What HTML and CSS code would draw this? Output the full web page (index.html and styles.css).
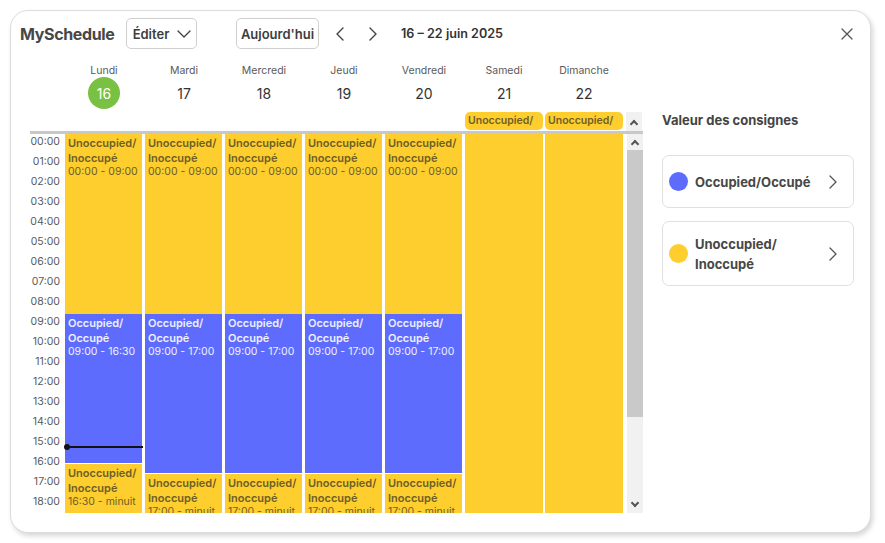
FILE: index.html
```html
<!DOCTYPE html>
<html lang="fr">
<head>
<meta charset="utf-8">
<title>MySchedule</title>
<link rel="stylesheet" href="styles.css">
</head>
<body>
<div class="card">
  <div class="header">
    <div class="title">MySchedule</div>
    <button class="btn btn-edit">Éditer
      <svg width="14" height="8" viewBox="0 0 14 8"><path d="M1 1 L7 7 L13 1" fill="none" stroke="#444" stroke-width="1.4" stroke-linecap="round" stroke-linejoin="round"/></svg>
    </button>
    <button class="btn btn-today">Aujourd'hui</button>
    <span class="nav nav-prev"><svg width="8" height="14" viewBox="0 0 8 14"><path d="M7 1 L1 7 L7 13" fill="none" stroke="#444" stroke-width="1.4" stroke-linecap="round" stroke-linejoin="round"/></svg></span>
    <span class="nav nav-next"><svg width="8" height="14" viewBox="0 0 8 14"><path d="M1 1 L7 7 L1 13" fill="none" stroke="#444" stroke-width="1.4" stroke-linecap="round" stroke-linejoin="round"/></svg></span>
    <div class="range">16 – 22 juin 2025</div>
    <span class="close"><svg width="12" height="12" viewBox="0 0 12 12"><path d="M1 1 L11 11 M11 1 L1 11" fill="none" stroke="#555" stroke-width="1.3" stroke-linecap="round"/></svg></span>
  </div>

  <div class="main">
    <div class="calendar">
      <div class="days">
        <div class="spacer"></div>
        <div class="day"><div class="dname">Lundi</div><div class="dnum today">16</div></div>
        <div class="day"><div class="dname">Mardi</div><div class="dnum">17</div></div>
        <div class="day"><div class="dname">Mercredi</div><div class="dnum">18</div></div>
        <div class="day"><div class="dname">Jeudi</div><div class="dnum">19</div></div>
        <div class="day"><div class="dname">Vendredi</div><div class="dnum">20</div></div>
        <div class="day"><div class="dname">Samedi</div><div class="dnum">21</div></div>
        <div class="day"><div class="dname">Dimanche</div><div class="dnum">22</div></div>
        <div class="gap"></div>
        <div class="sb-spacer"></div>
      </div>

      <div class="allday">
        <div class="spacer"></div>
        <div class="acell"></div>
        <div class="acell"></div>
        <div class="acell"></div>
        <div class="acell"></div>
        <div class="acell"></div>
        <div class="acell"><div class="chip">Unoccupied/</div></div>
        <div class="acell"><div class="chip">Unoccupied/</div></div>
        <div class="gap"></div>
        <div class="sb-mini"><span class="caret up"></span></div>
      </div>

      <div class="sep"></div>

      <div class="body">
        <div class="viewport">
          <div class="grid">
            <div class="times">
              <div class="t">00:00</div><div class="t">01:00</div><div class="t">02:00</div><div class="t">03:00</div>
              <div class="t">04:00</div><div class="t">05:00</div><div class="t">06:00</div><div class="t">07:00</div>
              <div class="t">08:00</div><div class="t">09:00</div><div class="t">10:00</div><div class="t">11:00</div>
              <div class="t">12:00</div><div class="t">13:00</div><div class="t">14:00</div><div class="t">15:00</div>
              <div class="t">16:00</div><div class="t">17:00</div><div class="t">18:00</div><div class="t">19:00</div>
              <div class="t">20:00</div><div class="t">21:00</div><div class="t">22:00</div><div class="t">23:00</div>
            </div>

            <div class="col">
              <div class="ev un" style="height:180px"><b>Unoccupied/</b><b>Inoccupé</b><span>00:00 - 09:00</span></div>
              <div class="ev oc" style="height:150px"><b>Occupied/</b><b>Occupé</b><span>09:00 - 16:30</span></div>
              <div class="ev un" style="height:150px"><b>Unoccupied/</b><b>Inoccupé</b><span>16:30 - minuit</span></div>
              <div class="now"></div>
            </div>
            <div class="col">
              <div class="ev un" style="height:180px"><b>Unoccupied/</b><b>Inoccupé</b><span>00:00 - 09:00</span></div>
              <div class="ev oc" style="height:160px"><b>Occupied/</b><b>Occupé</b><span>09:00 - 17:00</span></div>
              <div class="ev un" style="height:140px"><b>Unoccupied/</b><b>Inoccupé</b><span>17:00 - minuit</span></div>
            </div>
            <div class="col">
              <div class="ev un" style="height:180px"><b>Unoccupied/</b><b>Inoccupé</b><span>00:00 - 09:00</span></div>
              <div class="ev oc" style="height:160px"><b>Occupied/</b><b>Occupé</b><span>09:00 - 17:00</span></div>
              <div class="ev un" style="height:140px"><b>Unoccupied/</b><b>Inoccupé</b><span>17:00 - minuit</span></div>
            </div>
            <div class="col">
              <div class="ev un" style="height:180px"><b>Unoccupied/</b><b>Inoccupé</b><span>00:00 - 09:00</span></div>
              <div class="ev oc" style="height:160px"><b>Occupied/</b><b>Occupé</b><span>09:00 - 17:00</span></div>
              <div class="ev un" style="height:140px"><b>Unoccupied/</b><b>Inoccupé</b><span>17:00 - minuit</span></div>
            </div>
            <div class="col">
              <div class="ev un" style="height:180px"><b>Unoccupied/</b><b>Inoccupé</b><span>00:00 - 09:00</span></div>
              <div class="ev oc" style="height:160px"><b>Occupied/</b><b>Occupé</b><span>09:00 - 17:00</span></div>
              <div class="ev un" style="height:140px"><b>Unoccupied/</b><b>Inoccupé</b><span>17:00 - minuit</span></div>
            </div>
            <div class="col wk">
              <div class="ev un" style="height:480px"></div>
            </div>
            <div class="col wk">
              <div class="ev un" style="height:480px"></div>
            </div>
          </div>
        </div>
        <div class="scrollbar">
          <div class="sb-btn"><span class="caret up"></span></div>
          <div class="thumb"></div>
          <div class="track"></div>
          <div class="sb-btn"><span class="caret down"></span></div>
        </div>
      </div>
    </div>

    <div class="panel">
      <div class="ptitle">Valeur des consignes</div>
      <div class="item item1">
        <span class="dot blue"></span>
        <span class="label">Occupied/Occupé</span>
        <svg class="chev" width="8" height="14" viewBox="0 0 8 14"><path d="M1 1 L7 7 L1 13" fill="none" stroke="#555" stroke-width="1.3" stroke-linecap="round" stroke-linejoin="round"/></svg>
      </div>
      <div class="item item2">
        <span class="dot yellow"></span>
        <span class="label">Unoccupied/<br>Inoccupé</span>
        <svg class="chev" width="8" height="14" viewBox="0 0 8 14"><path d="M1 1 L7 7 L1 13" fill="none" stroke="#555" stroke-width="1.3" stroke-linecap="round" stroke-linejoin="round"/></svg>
      </div>
    </div>
  </div>
</div>
</body>
</html>
```

FILE: styles.css
```css
* { box-sizing: border-box; }
html, body { margin: 0; padding: 0; background: #fff; }
body {
  font-family: Inter, "Noto Sans", "Liberation Sans", sans-serif;
  color: #333;
  width: 885px;
  height: 543px;
  overflow: hidden;
}

.card {
  margin: 10px 0 0 10px;
  width: 861px;
  height: 523px;
  border: 1px solid #dcdcdc;
  border-radius: 18px;
  box-shadow: 2px 3px 5px rgba(0, 0, 0, 0.16);
  padding: 7px 13px 0 9px;
  background: #fff;
}

/* header */
.header {
  display: flex;
  align-items: center;
  height: 31px;
}
.title {
  width: 106px;
  font-size: 16px;
  font-weight: 700;
  color: #474747;
  letter-spacing: -0.35px;
}
.btn {
  height: 31px;
  border: 1px solid #cfcfcf;
  border-radius: 5px;
  background: #fff;
  font-family: inherit;
  font-size: 13px;
  font-weight: 600;
  color: #3d3d3d;
  display: flex;
  align-items: center;
  padding: 0;
  justify-content: center;
}
.btn-edit { width: 71px; gap: 8px; padding-left: 1px; }
.btn-edit svg { margin-top: 1px; }
.btn-today { width: 83px; margin-left: 39px; }
.nav {
  width: 20px;
  height: 20px;
  display: flex;
  align-items: center;
  justify-content: center;
}
.nav-prev { margin-left: 11px; }
.nav-next { margin-left: 13px; }
.range {
  margin-left: 18px;
  font-size: 12.6px;
  font-weight: 600;
  color: #333;
}
.close {
  margin-left: auto;
  width: 20px;
  height: 20px;
  display: flex;
  align-items: center;
  justify-content: center;
}

/* main */
.main {
  display: flex;
  margin-top: 15px;
}
.calendar {
  width: 613px;
  margin-left: 10px;
}

.days, .allday {
  display: grid;
  grid-template-columns: 34px repeat(7, 80px) 2px 16px;
}
.days { height: 48px; }
.day {
  display: flex;
  flex-direction: column;
  align-items: center;
}
.dname {
  font-size: 10.5px;
  line-height: 13px;
  color: #5a5a5a;
}
.dnum {
  width: 32px;
  height: 32px;
  border-radius: 50%;
  display: flex;
  align-items: center;
  justify-content: center;
  font-size: 14px;
  color: #333;
}
.dnum.today {
  background: #79c142;
  color: #fff;
}

.allday { height: 19px; }
.acell { padding: 0 1px 1px 1px; }
.chip {
  height: 18px;
  background: #fece2f;
  border-radius: 5px;
  font-size: 10.5px;
  font-weight: 600;
  color: #6e5e26;
  line-height: 18px;
  padding-left: 3px;
  white-space: nowrap;
  overflow: hidden;
}
.sb-mini {
  background: #f1f1f1;
  display: flex;
  justify-content: center;
  align-items: center;
}

.sep {
  height: 3px;
  background: #c8c8c8;
  width: 613px;
}

.body {
  display: flex;
  height: 379px;
}
.viewport {
  width: 596px;
  margin-right: 2px;
  overflow: hidden;
}
.grid {
  display: grid;
  grid-template-columns: 34px repeat(7, 80px);
  height: 480px;
}
.times { padding-right: 4px; }
.t {
  height: 20px;
  font-size: 10.5px;
  line-height: 15px;
  color: #5a5a5a;
  text-align: right;
}

.col {
  position: relative;
  display: flex;
  flex-direction: column;
  padding: 0 2px 0 1px;
}
.col.wk { padding: 0 1px 0 1px; }
.ev {
  flex: none;
  padding: 2px 3px;
  font-size: 11px;
  line-height: 14.5px;
  display: flex;
  flex-direction: column;
  overflow: hidden;
  white-space: nowrap;
}
.ev b { font-weight: 600; }
.ev span { font-weight: 400; font-size: 10.5px; }
.ev.un {
  background: #fece2f;
  color: #6e5e26;
}
.ev.oc {
  background: #5e6cfd;
  color: #eef0ff;
  border-bottom: 1px solid #fff;
}
.now {
  position: absolute;
  left: 1px;
  top: 312px;
  width: 78px;
  height: 2px;
  background: #111;
}
.now::before {
  content: "";
  position: absolute;
  left: -1px;
  top: -2px;
  width: 6px;
  height: 6px;
  border-radius: 50%;
  background: #111;
}

.scrollbar {
  width: 16px;
  display: flex;
  flex-direction: column;
  background: #f1f1f1;
}
.sb-btn {
  height: 16px;
  display: flex;
  align-items: center;
  justify-content: center;
}
.thumb {
  height: 267px;
  background: #c9c9c9;
}
.track { flex: 1; }
.caret {
  width: 6px;
  height: 6px;
  border-left: 2px solid #555;
  border-top: 2px solid #555;
}
.caret.up { transform: translateY(2px) rotate(45deg); }
.caret.down { transform: translateY(-2px) rotate(225deg); }

/* panel */
.panel {
  width: 192px;
  margin-left: 19px;
  padding-top: 48px;
}
.ptitle {
  font-size: 13px;
  font-weight: 700;
  color: #444;
  line-height: 16px;
}
.item {
  display: flex;
  align-items: center;
  border: 1px solid #e0e0e0;
  border-radius: 7px;
  padding: 0 16px 0 6px;
}
.item1 { height: 53px; margin-top: 27px; }
.item2 { height: 65px; margin-top: 13px; }
.dot {
  width: 19px;
  height: 19px;
  border-radius: 50%;
  flex: none;
}
.dot.blue { background: #5e6cfd; }
.dot.yellow { background: #fece2f; }
.label {
  margin-left: 7px;
  font-size: 13px;
  font-weight: 700;
  line-height: 20px;
  color: #474747;
  flex: 1;
}
.chev { flex: none; }
```
